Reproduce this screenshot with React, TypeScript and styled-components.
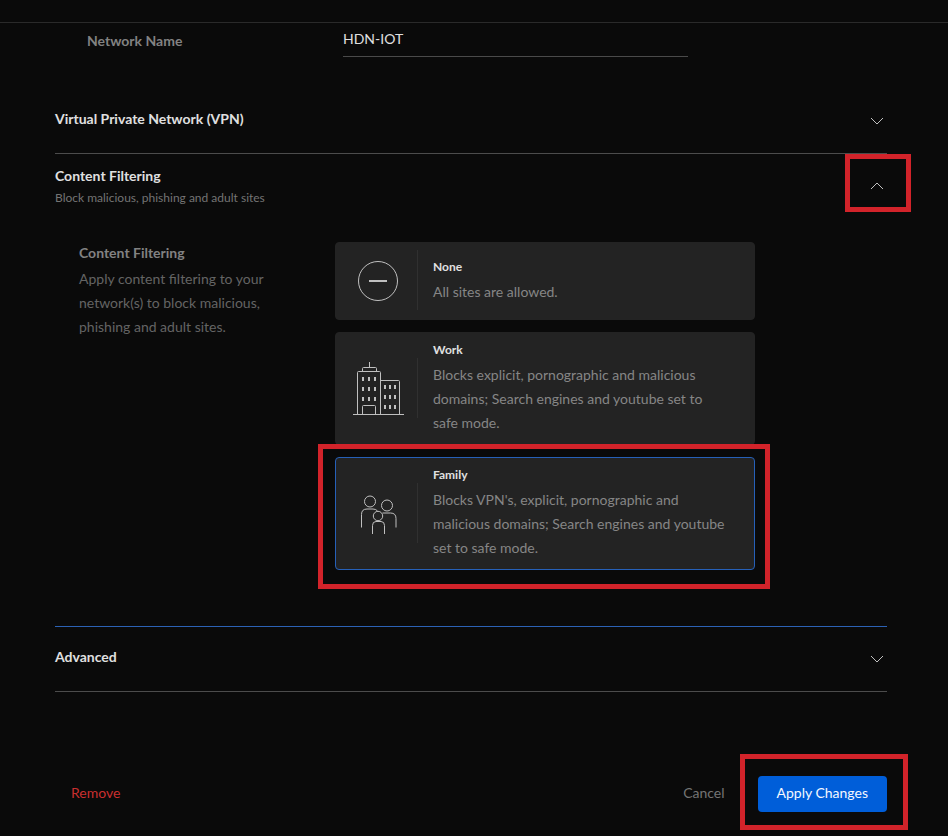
import { useState } from "react";
import type { ReactNode } from "react";
import styled, { createGlobalStyle } from "styled-components";

const GlobalStyle = createGlobalStyle`
  *, *::before, *::after { box-sizing: border-box; }
  body {
    margin: 0;
    background: #0a0a0a;
    color: #e0e0e0;
    font-family: Lato, "Open Sans", sans-serif;
    font-size: 14px;
    line-height: 24px;
  }
  button, input { font: inherit; color: inherit; }
`;

const Page = styled.div`
  min-height: 100vh;
`;

const TopBar = styled.header`
  height: 23px;
  border-bottom: 1px solid #2a2a2a;
`;

const Form = styled.form`
  padding: 0 61px 24px 55px;
`;

const NameRow = styled.div`
  display: flex;
  align-items: flex-start;
  padding-left: 32px;
  margin-bottom: 30px;
`;

const NameLabel = styled.label`
  flex: 0 0 256px;
  font-weight: 700;
  line-height: 36px;
  color: #828282;
`;

const NameInput = styled.input`
  flex: 0 1 345px;
  min-width: 0;
  height: 34px;
  padding: 0 0 2px;
  border: 0;
  border-bottom: 1px solid #4a4a4a;
  border-radius: 0;
  background: transparent;
  outline: none;
`;

const Section = styled.section<{ $active?: boolean }>`
  border-bottom: 1px solid ${(p) => (p.$active ? "#2c62b5" : "#4c4c4c")};
`;

const SectionToggle = styled.button`
  display: flex;
  width: 100%;
  height: 64px;
  align-items: center;
  justify-content: space-between;
  padding: 0 3px 0 0;
  border: 0;
  background: transparent;
  text-align: left;
  cursor: pointer;
`;

const SectionHeading = styled.span`
  display: flex;
  flex-direction: column;
  gap: 2px;
  padding-bottom: 4px;
  line-height: 20px;

  &:has(small) { padding: 2px 0 0; }
`;

const SectionTitle = styled.strong`
  font-weight: 700;
`;

const SectionHint = styled.small`
  font-size: 12px;
  color: #747474;
`;

const Marked = styled.span<{ $inset: string }>`
  position: relative;
  display: block;

  &::after {
    content: "";
    position: absolute;
    inset: ${(p) => p.$inset};
    border: 5px solid #d2232a;
    pointer-events: none;
  }
`;

const Panel = styled.div`
  display: flex;
  align-items: flex-start;
  padding: 24px 0 56px 24px;
`;

const PanelInfo = styled.div`
  flex: 0 0 256px;
  padding-right: 56px;
`;

const PanelTitle = styled.h3`
  margin: 0 0 3px;
  font-size: 14px;
  line-height: 22px;
  color: #828282;
`;

const PanelText = styled.p`
  margin: 0;
  color: #646464;
`;

const Options = styled.div`
  display: flex;
  flex: 0 1 420px;
  flex-direction: column;
  gap: 12px;
`;

const Card = styled.label`
  display: flex;
  align-items: center;
  min-height: 78px;
  padding: 7px 24px 9px 0;
  border: 1px solid #232323;
  border-radius: 4px;
  background: #232323;
  cursor: pointer;

  &:has(input:checked) { border-color: #2660b8; }
`;

const CardRadio = styled.input`
  appearance: none;
  width: 0;
  height: 0;
  margin: 0;
`;

const CardIcon = styled.span`
  display: flex;
  flex: 0 0 82px;
  height: 60px;
  align-items: center;
  justify-content: center;
  padding: 2px 0 0 3px;
  border-right: 1px solid #303030;
  color: #c0c0c0;
`;

const CardBody = styled.span`
  display: flex;
  flex-direction: column;
  gap: 3px;
  padding-left: 15px;
`;

const CardTitle = styled.strong`
  font-size: 12px;
  line-height: 20px;
`;

const CardText = styled.span`
  color: #868686;
`;

const Footer = styled.footer`
  display: flex;
  align-items: center;
  margin-top: 84px;
  padding-left: 16px;
`;

const TextButton = styled.button<{ $tone: "danger" | "muted" }>`
  padding: 0 0 2px;
  border: 0;
  background: transparent;
  color: ${(p) => (p.$tone === "danger" ? "#c92f2f" : "#747474")};
  cursor: pointer;
`;

const FooterActions = styled.div`
  display: flex;
  align-items: center;
  gap: 33px;
  margin-left: auto;
`;

const PrimaryButton = styled.button`
  height: 36px;
  padding: 0 19px 2px;
  border: 0;
  border-radius: 4px;
  background: #005ed9;
  color: #f4f8ff;
  cursor: pointer;
`;

const Chevron = ({ up }: { up?: boolean }) => (
  <svg width="14" height="8" viewBox="0 0 14 8" fill="none" stroke="#c0c0c0" aria-hidden="true" display="block">
    <path d={up ? "M1 7 7 1l6 6" : "M1 1l6 6 6-6"} />
  </svg>
);

const NoneIcon = () => (
  <svg width="40" height="40" viewBox="0 0 40 40" fill="none" stroke="currentColor" aria-hidden="true">
    <circle cx="20" cy="20" r="19.5" />
    <path d="M11 20h18" strokeWidth="2" />
  </svg>
);

const WorkIcon = () => (
  <svg width="50" height="54" viewBox="0 0 50 54" fill="none" stroke="currentColor" overflow="visible" aria-hidden="true">
    <path d="M0 52.500h51M4.500 52.500v-42q0-1 1-1h21q1 0 1 1v42M9.500 9.500v-3q0-1 1-1h12q1 0 1 1v3M16.500 0v5.500M27.500 18.500h18q1 0 1 1v33M9.500 52.500v-8q0-1 1-1h11q1 0 1 1v8" />
    <path d="M10 15v4M16 15v4M22 15v4M10 25v4M16 25v4M22 25v4M10 35v4M16 35v4M22 35v4M32 23v4M37 23v4M42 23v4M32 33v4M37 33v4M42 33v4M32 43v4M37 43v4M42 43v4" strokeWidth="2" />
  </svg>
);

const FamilyIcon = () => (
  <svg width="34" height="38" viewBox="0 0 34 38" fill="none" stroke="currentColor" overflow="visible" aria-hidden="true">
    <circle cx="9" cy="6.500" r="5.500" />
    <circle cx="26" cy="10.500" r="5.500" />
    <circle cx="17" cy="21" r="4.700" />
    <path d="M.5 32.500V19.500q0-5.500 5.500-5.500h6q3 0 4.500 2M21.500 18h8q5.500 0 5.500 5.500v9M11.500 39v-8.500q0-4 3.500-4h5q3.500 0 3.500 4V39" />
  </svg>
);

type Level = "none" | "work" | "family";

const levels: { id: Level; title: string; text: string; icon: ReactNode; inset?: string }[] = [
  { id: "none", title: "None", text: "All sites are allowed.", icon: <NoneIcon /> },
  {
    id: "work",
    title: "Work",
    text: "Blocks explicit, pornographic and malicious domains; Search engines and youtube set to safe mode.",
    icon: <WorkIcon />,
  },
  {
    id: "family",
    title: "Family",
    text: "Blocks VPN's, explicit, pornographic and malicious domains; Search engines and youtube set to safe mode.",
    icon: <FamilyIcon />,
    inset: "-13px -15px -19px -17px",
  },
];

export default function App() {
  const [name, setName] = useState("HDN-IOT");
  const [level, setLevel] = useState<Level>("family");
  const [open, setOpen] = useState(true);

  return (
    <Page>
      <GlobalStyle />
      <TopBar />
      <Form onSubmit={(e) => e.preventDefault()}>
        <NameRow>
          <NameLabel htmlFor="network-name">Network Name</NameLabel>
          <NameInput id="network-name" value={name} onChange={(e) => setName(e.target.value)} />
        </NameRow>

        <Section>
          <SectionToggle type="button" aria-expanded={false}>
            <SectionHeading>
              <SectionTitle>Virtual Private Network (VPN)</SectionTitle>
            </SectionHeading>
            <Chevron />
          </SectionToggle>
        </Section>

        <Section $active>
          <SectionToggle type="button" aria-expanded={open} onClick={() => setOpen(!open)}>
            <SectionHeading>
              <SectionTitle>Content Filtering</SectionTitle>
              <SectionHint>Block malicious, phishing and adult sites</SectionHint>
            </SectionHeading>
            <Marked $inset="-28px -27px -22px -25px">
              <Chevron up={open} />
            </Marked>
          </SectionToggle>
          {open && (
            <Panel>
              <PanelInfo>
                <PanelTitle>Content Filtering</PanelTitle>
                <PanelText>Apply content filtering to your network(s) to block malicious, phishing and adult sites.</PanelText>
              </PanelInfo>
              <Options role="radiogroup" aria-label="Content Filtering">
                {levels.map((item) => {
                  const card = (
                    <Card key={item.id} htmlFor={`level-${item.id}`}>
                      <CardRadio
                        type="radio"
                        name="level"
                        id={`level-${item.id}`}
                        checked={level === item.id}
                        onChange={() => setLevel(item.id)}
                      />
                      <CardIcon>{item.icon}</CardIcon>
                      <CardBody>
                        <CardTitle>{item.title}</CardTitle>
                        <CardText>{item.text}</CardText>
                      </CardBody>
                    </Card>
                  );
                  return item.inset ? (
                    <Marked key={item.id} $inset={item.inset}>
                      {card}
                    </Marked>
                  ) : (
                    card
                  );
                })}
              </Options>
            </Panel>
          )}
        </Section>

        <Section>
          <SectionToggle type="button" aria-expanded={false}>
            <SectionHeading>
              <SectionTitle>Advanced</SectionTitle>
            </SectionHeading>
            <Chevron />
          </SectionToggle>
        </Section>

        <Footer>
          <TextButton type="button" $tone="danger">Remove</TextButton>
          <FooterActions>
            <TextButton type="button" $tone="muted">Cancel</TextButton>
            <Marked $inset="-22px -21px -18px -18px">
              <PrimaryButton type="submit">Apply Changes</PrimaryButton>
            </Marked>
          </FooterActions>
        </Footer>
      </Form>
    </Page>
  );
}
